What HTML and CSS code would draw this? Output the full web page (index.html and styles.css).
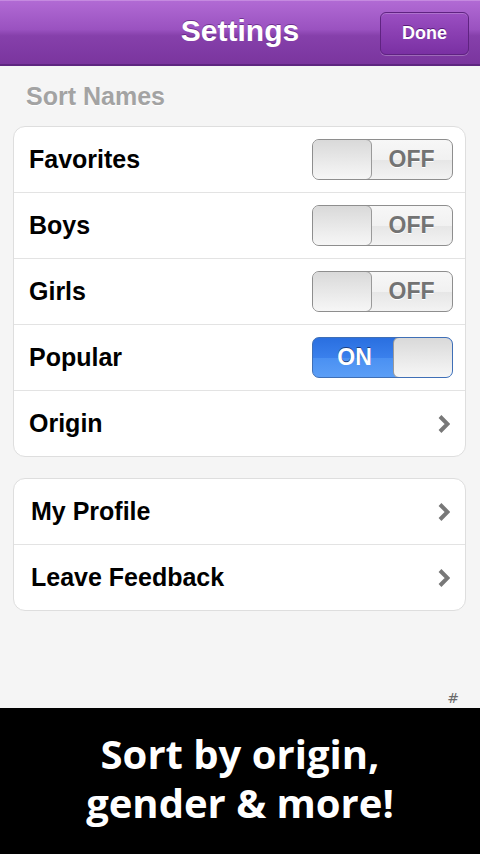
FILE: index.html
```html
<!DOCTYPE html>
<html lang="en">

<head>
    <meta charset="UTF-8">
    <meta name="viewport" content="width=device-width, initial-scale=1.0">
    <title>Settings</title>

    <link rel="stylesheet" href="styles.css">
</head>

<body>
    <div class="tela">
        <div class="barra">
            <h1 class="barra-titulo">Settings</h1>
            <a class="barra-botao">Done</a>
        </div>

        <div class="conteudo">
            <h2 class="secao">Sort Names</h2>

            <ul class="grupo">
                <li class="linha">
                    <span class="linha-texto">Favorites</span>
                    <span class="chave"><span class="chave-botao"></span><span class="chave-off">OFF</span></span>
                </li>
                <li class="linha">
                    <span class="linha-texto">Boys</span>
                    <span class="chave"><span class="chave-botao"></span><span class="chave-off">OFF</span></span>
                </li>
                <li class="linha">
                    <span class="linha-texto">Girls</span>
                    <span class="chave"><span class="chave-botao"></span><span class="chave-off">OFF</span></span>
                </li>
                <li class="linha">
                    <span class="linha-texto">Popular</span>
                    <span class="chave ligada"><span class="chave-on">ON</span><span class="chave-botao"></span></span>
                </li>
                <li class="linha">
                    <span class="linha-texto">Origin</span>
                    <svg class="seta" width="12" height="20" viewBox="0 0 12 20"><path d="M2 2.5 L9.5 10 L2 17.5" fill="none" stroke="#787878" stroke-width="4"/></svg>
                </li>
            </ul>

            <ul class="grupo grupo-2">
                <li class="linha">
                    <span class="linha-texto">My Profile</span>
                    <svg class="seta" width="12" height="20" viewBox="0 0 12 20"><path d="M2 2.5 L9.5 10 L2 17.5" fill="none" stroke="#787878" stroke-width="4"/></svg>
                </li>
                <li class="linha">
                    <span class="linha-texto">Leave Feedback</span>
                    <svg class="seta" width="12" height="20" viewBox="0 0 12 20"><path d="M2 2.5 L9.5 10 L2 17.5" fill="none" stroke="#787878" stroke-width="4"/></svg>
                </li>
            </ul>

            <span class="cerquilha">#</span>
        </div>

        <div class="legenda">
            Sort by origin,<br>gender &amp; more!
        </div>
    </div>
</body>

</html>
```

FILE: styles.css
```css
* {
    box-sizing: border-box;
}

body {
    margin: 0;
    background-color: #000;
    font-family: "Liberation Sans", Arial, sans-serif;
}

.tela {
    display: flex;
    flex-direction: column;
    width: 480px;
    height: 854px;
}

/* barra roxa do topo */
.barra {
    position: relative;
    display: flex;
    align-items: center;
    justify-content: center;
    height: 66px;
    flex-shrink: 0;
    background: linear-gradient(#b16ad4 0%, #9a52c0 45%, #8640ab 55%, #7a359e 100%);
    border-top: 1px solid #c58ae0;
    border-bottom: 2px solid #5e2680;
}

.barra-titulo {
    margin: 0 0 3px;
    color: #fff;
    font-size: 30px;
    font-weight: 700;
    text-shadow: 0 -1px 0 rgba(60, 10, 90, .5);
}

.barra-botao {
    position: absolute;
    right: 11px;
    top: 11px;
    width: 89px;
    height: 43px;
    display: flex;
    align-items: center;
    justify-content: center;
    color: #fff;
    font-size: 18px;
    font-weight: 700;
    border: 1px solid #5f2381;
    border-radius: 6px;
    background: linear-gradient(#9b4fc2, #8a3fb2 50%, #7a30a3);
    box-shadow: 0 1px 0 rgba(255, 255, 255, .25), inset 0 1px 0 rgba(255, 255, 255, .2);
    text-shadow: 0 -1px 0 rgba(50, 0, 80, .6);
}

.conteudo {
    position: relative;
    flex-grow: 1;
    background-color: #f5f5f5;
    padding: 15px 14px 0 13px;
}

.secao {
    margin: 0 0 15px 13px;
    color: #a3a3a3;
    font-size: 25px;
    font-weight: 700;
    line-height: 30px;
    text-shadow: 0 1px 0 #fff;
}

.grupo {
    list-style: none;
    margin: 0;
    padding: 0;
    background-color: #fff;
    border: 1px solid #dedede;
    border-radius: 12px;
}

.grupo-2 {
    margin-top: 21px;
}

.linha {
    display: flex;
    align-items: center;
    justify-content: space-between;
    height: 66px;
    padding: 0 12px 0 15px;
    border-bottom: 1px solid #e3e3e3;
}

.linha:last-child {
    border-bottom: none;
    height: 65px;
}

.grupo-2 .linha {
    padding-left: 17px;
}

.linha-texto {
    color: #000;
    font-size: 25px;
    font-weight: 700;
}

.seta {
    margin-right: 3px;
}

/* chave liga/desliga */
.chave {
    display: flex;
    width: 141px;
    height: 41px;
    border: 1px solid #8e8e8e;
    border-radius: 7px;
    overflow: hidden;
    background: linear-gradient(#f7f7f7 0%, #f1f1f1 50%, #e6e6e6 51%, #f3f3f3 100%);
}

.chave-botao {
    width: 60px;
    flex-shrink: 0;
    border: 1px solid #9a9a9a;
    border-radius: 6px;
    margin: -1px;
    background: linear-gradient(#d9d9d9, #eeeeee 70%, #f6f6f6);
}

.chave-off,
.chave-on {
    flex-grow: 1;
    display: flex;
    align-items: center;
    justify-content: center;
    font-size: 23px;
    font-weight: 700;
}

.chave-off {
    color: #737373;
    text-shadow: 0 1px 0 #fff;
}

.ligada {
    border-color: #3f6fb6;
    background: linear-gradient(#2a6fe0 0%, #3a80ec 50%, #4a90f2 51%, #5b9ef6 100%);
}

.chave-on {
    color: #fff;
    padding-left: 2px;
    text-shadow: 0 -1px 0 #1e3e80;
}

.cerquilha {
    position: absolute;
    right: 21px;
    bottom: 2px;
    color: #6a6a6a;
    font-size: 14px;
    font-family: "DejaVu Sans", sans-serif;
}

/* faixa preta de baixo */
.legenda {
    height: 146px;
    flex-shrink: 0;
    display: flex;
    align-items: center;
    justify-content: center;
    text-align: center;
    padding-bottom: 6px;
    color: #fff;
    font-family: "Open Sans", sans-serif;
    font-size: 40px;
    font-weight: 700;
    line-height: 49px;
}
```
